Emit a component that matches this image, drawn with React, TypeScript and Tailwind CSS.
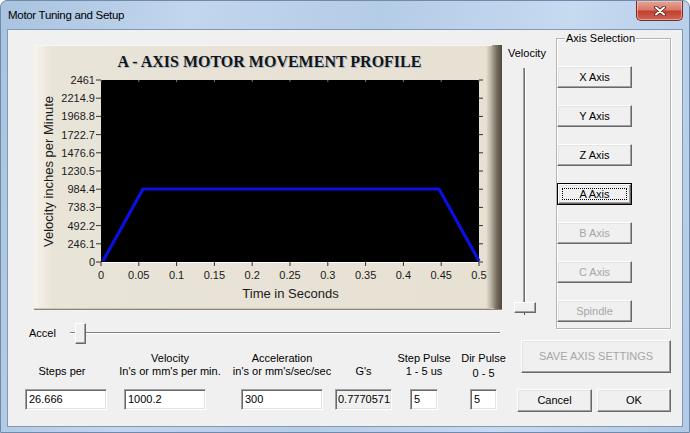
import React from "react";

const FONT = "font-['Liberation_Sans',Arial,sans-serif]";

function RaisedButton({
  label,
  disabled = false,
  isDefault = false,
  className = "",
}: {
  label: string;
  disabled?: boolean;
  isDefault?: boolean;
  className?: string;
}) {
  const inner = (
    <div
      className={`relative flex h-full w-full items-center justify-center bg-[#f0f0f0] border border-t-white border-l-white border-r-[#696969] border-b-[#696969] shadow-[inset_-1px_-1px_0_#a0a0a0,inset_1px_1px_0_#e3e3e3] text-[11px] leading-none ${
        disabled ? "text-[#a6a6a6]" : "text-black"
      }`}
    >
      {isDefault && (
        <div className="pointer-events-none absolute inset-[3px] border border-dotted border-black" />
      )}
      <span>{label}</span>
    </div>
  );
  if (isDefault) {
    return <div className={`border border-black ${className}`}>{inner}</div>;
  }
  return <div className={className}>{inner}</div>;
}

function TextBox({
  value,
  readOnly = false,
  className = "",
}: {
  value: string;
  readOnly?: boolean;
  className?: string;
}) {
  return (
    <div
      className={`flex h-[21px] items-center border border-t-[#a0a0a0] border-l-[#a0a0a0] border-r-white border-b-white shadow-[inset_1px_1px_0_#696969,inset_-1px_-1px_0_#e3e3e3] text-[11px] text-black whitespace-nowrap overflow-hidden ${
        readOnly ? "bg-[#f0f0f0] pl-[2px]" : "bg-white pl-[3px]"
      } ${className}`}
    >
      {value}
    </div>
  );
}

const yLabels = [
  "2461",
  "2214.9",
  "1968.8",
  "1722.7",
  "1476.6",
  "1230.5",
  "984.4",
  "738.3",
  "492.2",
  "246.1",
  "0",
];
const xLabels = ["0", "0.05", "0.1", "0.15", "0.2", "0.25", "0.3", "0.35", "0.4", "0.45", "0.5"];

function Chart() {
  const px0 = 67;
  const py0 = 35;
  const pw = 378;
  const ph = 182;
  const sf = "Liberation Sans, Arial, sans-serif";
  return (
    <div className="ml-[26px] mt-[15px] h-[265px] w-[468px] bg-[linear-gradient(to_right,#f7f4ed_0px,#e9e4d8_18px,#e7e1d4_452px,#b9b1a1_457px,#7c7464_462px,#4c463b_468px)]">
      <svg width={468} height={265} className="block">
        <line x1={0} y1={0.5} x2={458} y2={0.5} stroke="#f8f6f1" />
        <line x1={0} y1={263.5} x2={460} y2={263.5} stroke="#cfc8b8" />
        <line x1={0} y1={264.5} x2={468} y2={264.5} stroke="#8c8474" />
        <text
          x={236.5}
          y={23}
          textAnchor="middle"
          fontFamily="Liberation Serif, Times New Roman, serif"
          fontWeight="bold"
          fontSize={16}
          fill="#aebfd2"
        >
          A - AXIS MOTOR MOVEMENT PROFILE
        </text>
        <text
          x={235.5}
          y={22}
          textAnchor="middle"
          fontFamily="Liberation Serif, Times New Roman, serif"
          fontWeight="bold"
          fontSize={16}
          fill="#141414"
        >
          A - AXIS MOTOR MOVEMENT PROFILE
        </text>
        <rect x={px0} y={py0} width={pw} height={ph} fill="#000" />
        <line x1={px0} y1={py0 + ph + 0.5} x2={px0 + pw} y2={py0 + ph + 0.5} stroke="#ffffff" />
        {yLabels.map((l, i) => {
          const y = py0 + 18.2 * i;
          return (
            <g key={l}>
              <line x1={62} y1={y} x2={px0} y2={y} stroke="#333" />
              <line x1={px0 + pw} y1={y} x2={px0 + pw + 4} y2={y} stroke="#333" />
              <text x={61} y={y + 4} textAnchor="end" fontFamily={sf} fontSize={11} fill="#1a1a1a">
                {l}
              </text>
            </g>
          );
        })}
        {xLabels.map((l, i) => {
          const x = px0 + 37.8 * i;
          return (
            <g key={l}>
              <line x1={x} y1={py0 + ph} x2={x} y2={py0 + ph + 4} stroke="#333" />
              <line x1={x} y1={py0} x2={x} y2={py0 + 2} stroke="#777" />
              <text x={x} y={234} textAnchor="middle" fontFamily={sf} fontSize={11} fill="#1a1a1a">
                {l}
              </text>
            </g>
          );
        })}
        <polyline
          points="69,216 109,144 405,144 445,216"
          fill="none"
          stroke="#0b10e0"
          strokeWidth={3.2}
          strokeLinejoin="round"
        />
        <text x={256.5} y={253} textAnchor="middle" fontFamily={sf} fontSize={13} fill="#1a1a1a">
          Time in Seconds
        </text>
        <text
          x={19}
          y={126.5}
          textAnchor="middle"
          fontFamily={sf}
          fontSize={13}
          fill="#1a1a1a"
          transform="rotate(-90 19 126.5)"
        >
          Velocity inches per Minute
        </text>
      </svg>
    </div>
  );
}

function VelocitySlider() {
  return (
    <div className="ml-[6px] flex w-[37px] flex-col">
      <div className="mt-[17px] h-[13px] text-[11px] leading-[13px] whitespace-nowrap">Velocity</div>
      <div className="relative mt-[8px] h-[247px]">
        <div className="absolute left-[15px] top-0 h-[244px] w-[3px] border-l border-l-[#a0a0a0] border-r border-r-white bg-[#707070]" />
        <div className="absolute left-[6px] top-[234px] h-[11px] w-[22px] bg-[#f0f0f0] border border-t-white border-l-white border-r-[#696969] border-b-[#696969] shadow-[inset_-1px_-1px_0_#a0a0a0]" />
        <div className="absolute left-[16px] top-[245px] h-[2px] w-[1px] bg-[#555]" />
      </div>
    </div>
  );
}

function AccelRow() {
  return (
    <div className="mt-[8px] flex h-[20px] items-center">
      <div className="ml-[21px] w-[41px] text-[11px] leading-[13px]">Accel</div>
      <div className="relative h-[20px] w-[430px]">
        <div className="absolute left-0 right-0 top-[9px] h-[2px] border-t border-t-[#808080] border-b border-b-white" />
        <div className="absolute left-[5px] top-0 h-[21px] w-[11px] bg-[#f0f0f0] border border-t-white border-l-white border-r-[#696969] border-b-[#696969] shadow-[inset_-1px_-1px_0_#a0a0a0]" />
      </div>
    </div>
  );
}

function Fields() {
  const labelCls = "flex h-[26px] flex-col items-center whitespace-nowrap text-[11px] leading-[13px]";
  return (
    <div className="mt-[9px] flex items-start">
      <div className="ml-[17px] flex w-[82px] flex-col items-center">
        <div className={`${labelCls} pt-[13px] -translate-x-[4px]`}>
          <span>Steps per</span>
        </div>
        <TextBox value="26.666" className="mt-[11px] w-[82px]" />
      </div>
      <div className="ml-[17px] flex w-[82px] flex-col items-center">
        <div className={`${labelCls} translate-x-[5px]`}>
          <span>Velocity</span>
          <span>In's or mm's per min.</span>
        </div>
        <TextBox value="1000.2" className="mt-[11px] w-[82px]" />
      </div>
      <div className="ml-[35px] flex w-[82px] flex-col items-center">
        <div className={labelCls}>
          <span>Acceleration</span>
          <span>in's or mm's/sec/sec</span>
        </div>
        <TextBox value="300" className="mt-[11px] w-[82px]" />
      </div>
      <div className="ml-[12px] flex w-[57px] flex-col items-center">
        <div className={`${labelCls} pt-[13px]`}>
          <span>G's</span>
        </div>
        <TextBox value="0.7770571" readOnly className="mt-[11px] w-[57px]" />
      </div>
      <div className="ml-[18px] flex w-[28px] flex-col items-center">
        <div className={labelCls}>
          <span>Step Pulse</span>
          <span>1 - 5 us</span>
        </div>
        <TextBox value="5" className="mt-[11px] w-[28px]" />
      </div>
      <div className="ml-[32px] flex w-[27px] flex-col items-center">
        <div className={labelCls}>
          <span>Dir Pulse</span>
          <span className="mt-[2px]">0 - 5</span>
        </div>
        <TextBox value="5" className="mt-[11px] w-[27px]" />
      </div>
    </div>
  );
}

function AxisGroup() {
  return (
    <div className="relative ml-[8px] mt-[8px] h-[291px] w-[115px] border border-[#b4b4b4] shadow-[inset_1px_1px_0_#ffffff,1px_1px_0_#ffffff]">
      <div className="absolute left-[8px] top-[-7px] bg-[#f0f0f0] px-[1px] text-[11px] leading-[13px] whitespace-nowrap">
        Axis Selection
      </div>
      <div className="flex flex-col gap-[17px] pt-[27px]">
        <RaisedButton label="X Axis" className="h-[22px] w-[75px]" />
        <RaisedButton label="Y Axis" className="h-[22px] w-[75px]" />
        <RaisedButton label="Z Axis" className="h-[22px] w-[75px]" />
        <RaisedButton label="A Axis" isDefault className="h-[22px] w-[75px]" />
        <RaisedButton label="B Axis" disabled className="h-[22px] w-[75px]" />
        <RaisedButton label="C Axis" disabled className="h-[22px] w-[75px]" />
        <RaisedButton label="Spindle" disabled className="h-[22px] w-[75px]" />
      </div>
    </div>
  );
}

export default function App() {
  return (
    <div
      className={`${FONT} h-[433px] w-[690px] overflow-hidden rounded-t-[7px] border border-[#6f8aab] bg-[linear-gradient(100deg,#a9c3e0_0%,#c2d6ed_25%,#b5cce7_50%,#c6daf0_75%,#b2cae6_100%)] text-black`}
    >
      <div className="flex h-[28px] items-start">
        <div className="ml-[7px] mt-[7px] text-[11.5px] leading-[14px] tracking-[-0.3px] text-black">
          Motor Tuning and Setup
        </div>
        <div className="ml-auto mr-[6px] flex h-[20px] w-[47px] items-center justify-center rounded-b-[5px] border border-t-0 border-[#7a2b22] bg-[linear-gradient(to_bottom,#e6a596_0%,#d77b6a_45%,#c3402f_55%,#cf6456_100%)] shadow-[inset_0_0_0_1px_rgba(255,220,210,0.5)]">
          <svg width={12} height={10} viewBox="0 0 12 10">
            <path d="M2 1.5 L10 8.5 M10 1.5 L2 8.5" stroke="#4a1c16" strokeWidth={3.6} strokeLinecap="round" />
            <path d="M2 1.5 L10 8.5 M10 1.5 L2 8.5" stroke="#ffffff" strokeWidth={2} strokeLinecap="round" />
          </svg>
        </div>
      </div>
      <div className="ml-[6px] flex h-[398px] w-[676px] border border-[#8299b3] bg-[#f0f0f0] text-[11px]">
        <div className="flex w-[540px] flex-col">
          <div className="flex h-[285px]">
            <Chart />
            <VelocitySlider />
          </div>
          <AccelRow />
          <Fields />
        </div>
        <div className="flex w-[134px] flex-col">
          <AxisGroup />
          <RaisedButton
            label="SAVE AXIS SETTINGS"
            disabled
            className="-ml-[27px] mt-[11px] h-[33px] w-[150px]"
          />
          <div className="-ml-[31px] mt-[16px] flex gap-[5px]">
            <RaisedButton label="Cancel" className="h-[23px] w-[75px]" />
            <RaisedButton label="OK" className="h-[23px] w-[74px]" />
          </div>
        </div>
      </div>
    </div>
  );
}
